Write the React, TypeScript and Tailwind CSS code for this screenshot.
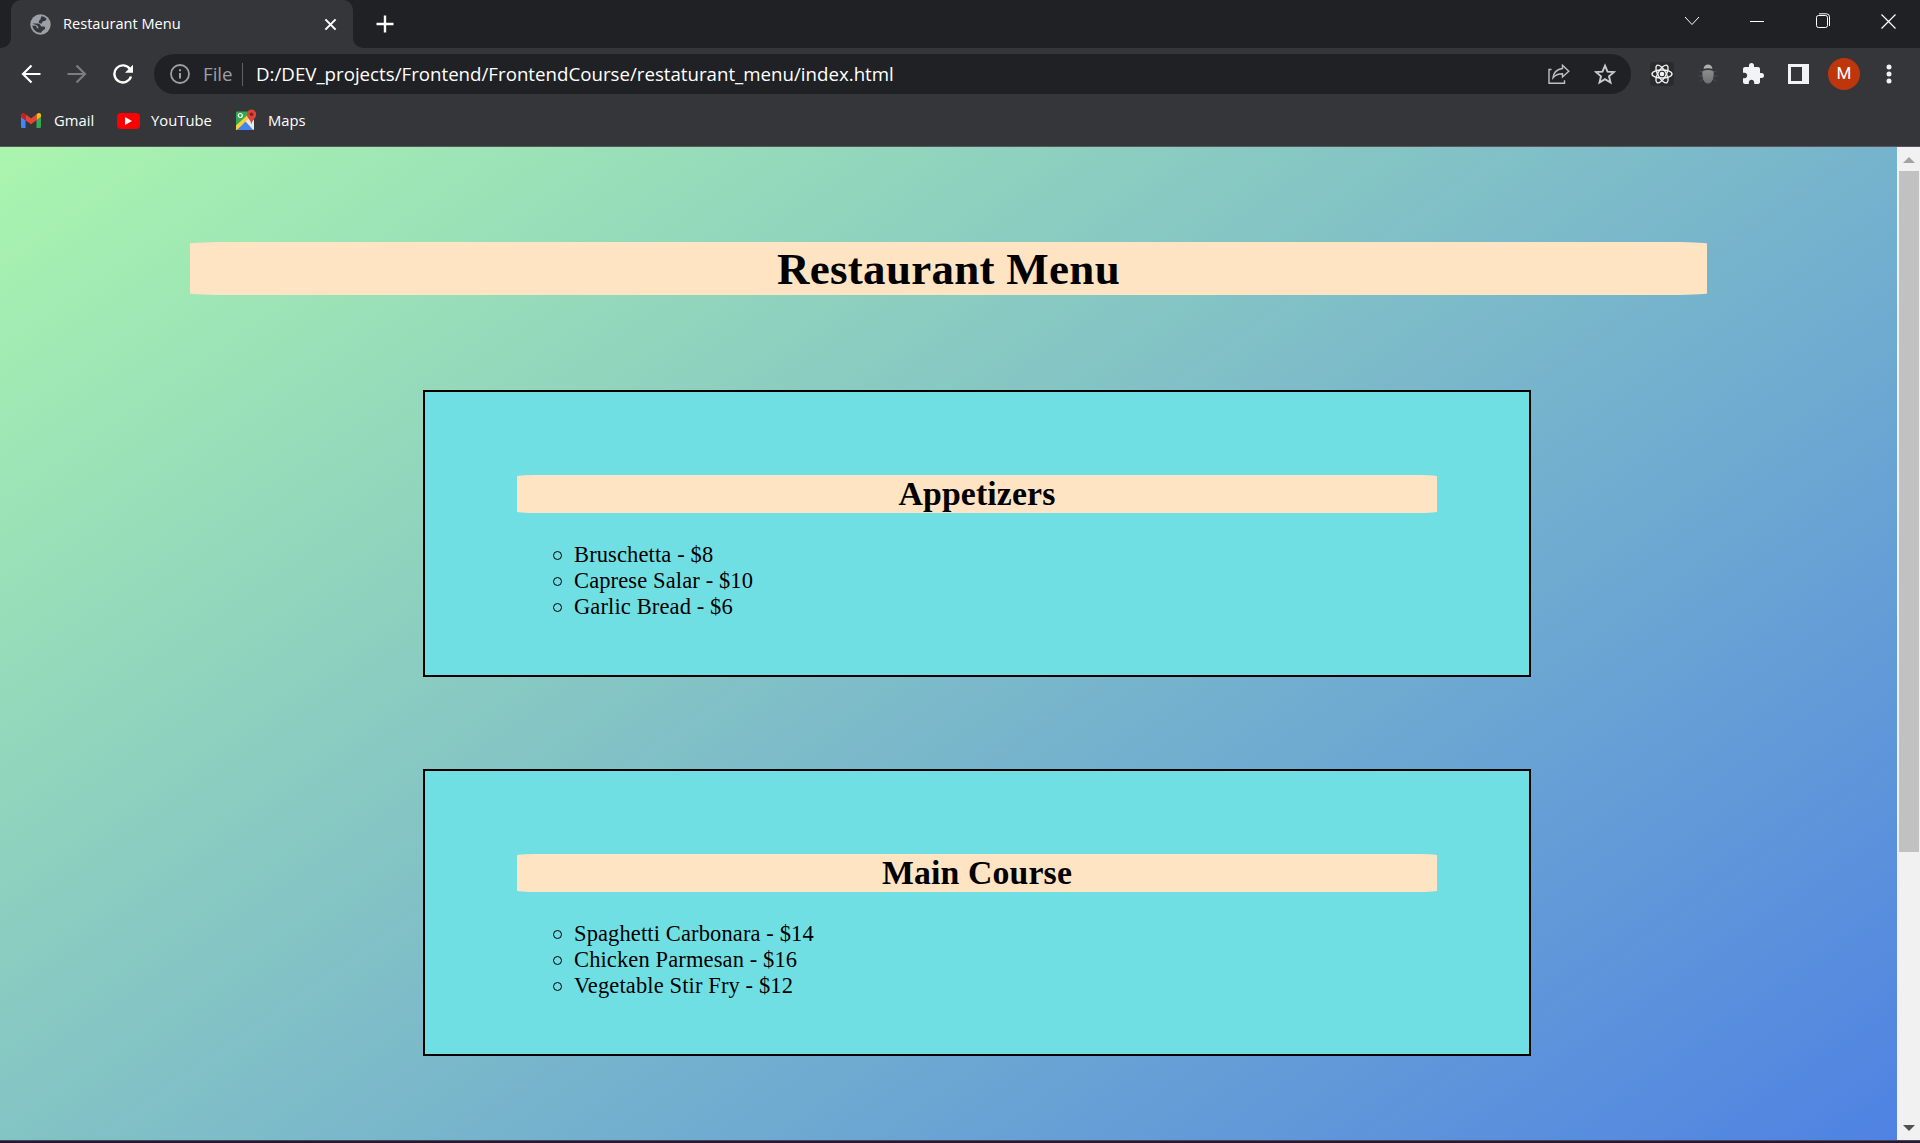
import React from "react";
import { MdExtension } from "react-icons/md";

const sections = [
  { title: "Appetizers", items: ["Bruschetta - $8", "Caprese Salar - $10", "Garlic Bread - $6"] },
  { title: "Main Course", items: ["Spaghetti Carbonara - $14", "Chicken Parmesan - $16", "Vegetable Stir Fry - $12"] },
];

function GlobeIcon() {
  return (
    <svg width="21" height="21" viewBox="0 0 21 21">
      <circle cx="10.5" cy="10.5" r="10.2" fill="#9aa0a6" />
      <path fill="#35363a" d="M11.500 2.200c2 .2 3.900 1.200 5.200 2.700l-1.200 1.600c-.8.900-2 .3-2.800 1-.6.600-.2 1.600-1.200 1.900-1.300.3-2.500-.4-2.700-1.500-.2-1 .9-1.500 1.500-2.300.8-1 .3-2.300 1.200-3.400z" />
      <path fill="#35363a" d="M2.300 9.500h5.500c1.900 0 2.600 1.100 2.900 2.200.2.700.9.800 1.700.8h1.400c1.500.1 1.700 1.500 1 2.500-.9 1.300-2.900 1.500-3.700 3.700-4.700.3-8.200-3-8.800-7.200l3 .2c1.200.1 1.500 1.300 1.400 2.300l1.600.4c.3-1.200-.2-2.500-1.500-3.200z" />
    </svg>
  );
}

function TabStrip() {
  return (
    <div className="flex h-12 shrink-0 items-stretch bg-[#202124]">
      <div className="w-[11px] bg-[#35363a]"><div className="h-full rounded-br-[10px] bg-[#202124]" /></div>
      <div className="flex w-[342px] items-center rounded-t-[10px] bg-[#35363a] pl-[19px] pr-[16px]">
        <GlobeIcon />
        <span className="ml-[12px] flex-1 text-[14.6px] text-white">Restaurant Menu</span>
        <svg width="13" height="13" viewBox="0 0 14 14" stroke="#fff" strokeWidth="2.2"><path d="M1.500 1.500l11 11M12.500 1.500l-11 11" /></svg>
      </div>
      <div className="w-[11px] bg-[#35363a]"><div className="h-full rounded-bl-[10px] bg-[#202124]" /></div>
      <div className="flex flex-1 items-center pl-[12px]">
        <svg width="18" height="18" viewBox="0 0 18 18" stroke="#fff" strokeWidth="2.4"><path d="M9 .5v17M.5 9h17" /></svg>
      </div>
      <div className="flex h-[42px] items-center text-white">
        <svg width="16" height="10" viewBox="0 0 16 10" fill="none" stroke="currentColor" className="mr-[50px]"><path d="M1 1l7 7.5L15 1" /></svg>
        <svg width="14" height="14" viewBox="0 0 14 14" stroke="currentColor" className="mr-[51px]"><path d="M0 7.5h14" /></svg>
        <svg width="16" height="16" viewBox="0 0 16 16" fill="none" stroke="currentColor" className="mr-[50px]"><rect x="1.500" y="2.500" width="11" height="12" rx="2" /><path d="M4 .8h7.500q3 0 3 3V13" /></svg>
        <svg width="15" height="15" viewBox="0 0 15 15" stroke="currentColor" strokeWidth="1.200" className="mr-[24px]"><path d="M.5.5l14 14M14.500.5l-14 14" /></svg>
      </div>
    </div>
  );
}

function ReactIcon() {
  return (
    <svg width="24" height="24" viewBox="0 0 24 24" fill="none" stroke="#f1f3f4" strokeWidth="1.400" className="rounded-sm bg-[#2b2b2d]">
      <ellipse cx="12" cy="12" rx="10" ry="4" />
      <ellipse cx="12" cy="12" rx="10" ry="4" transform="rotate(60 12 12)" />
      <ellipse cx="12" cy="12" rx="10" ry="4" transform="rotate(120 12 12)" />
      <circle cx="12" cy="12" r="1.600" fill="#f1f3f4" />
    </svg>
  );
}

function BugIcon() {
  return (
    <svg width="20" height="20" viewBox="0 0 20 20">
      <defs><linearGradient id="shell" x1="0" y1="0" x2="0" y2="1"><stop offset="0" stopColor="#8e8e8e" /><stop offset="1" stopColor="#707070" /></linearGradient></defs>
      <path d="M5 8.500L1.500 7M4 12H.5M5 15l-3 2.500M15 8.500L18.500 7M16 12h3.500M15 15l3 2.500" stroke="#4c4d50" fill="none" />
      <path d="M5.500 4.800C6 1.800 8 .5 10 .5s4 1.300 4.500 4.300q-4.500-1-9 0z" fill="#b0b0b0" />
      <path d="M4.600 7q5.400-1.800 10.800 0c1 6-1 12.500-5.400 12.500S3.600 13 4.600 7z" fill="url(#shell)" />
    </svg>
  );
}

function Toolbar() {
  return (
    <div className="flex h-[52px] shrink-0 items-center bg-[#35363a] pl-[21px]">
      <svg width="20" height="20" viewBox="0 0 20 20" fill="none" stroke="#fff" strokeWidth="2.200"><path d="M19.500 10H2M10.500 1.500L2 10l8.500 8.500" /></svg>
      <svg width="20" height="20" viewBox="0 0 20 20" fill="none" stroke="#7c7d80" strokeWidth="2.200" className="ml-[26px]"><path d="M.5 10H18M9.500 1.500L18 10l-8.500 8.500" /></svg>
      <svg width="20" height="20" viewBox="0 0 20 20" fill="none" stroke="#fff" strokeWidth="2.400" className="ml-[26px]"><path d="M17 5.200A8.500 8.500 0 1 0 18 12.500" /><path d="M20 .8v8h-8z" fill="#fff" stroke="none" /></svg>
      <div className="ml-[21px] flex h-10 w-[1477px] items-center rounded-full bg-[#202124] pl-[16px] pr-[15px]">
        <svg width="20" height="20" viewBox="0 0 20 20" fill="none" stroke="#9aa0a6" strokeWidth="1.800"><circle cx="10" cy="10" r="9" /><path d="M10 9v5.500M10 5.200v2" strokeWidth="2" /></svg>
        <span className="ml-[13px] w-[29px] text-[18.700px] text-[#9aa0a6]">File</span>
        <div className="ml-[10px] mr-[13px] h-[23px] w-px bg-[#5f6368]" />
        <span className="flex-1 text-[18.720px] text-white">D:/DEV_projects/Frontend/FrontendCourse/restaturant_menu/index.html</span>
        <svg width="22" height="20" viewBox="0 0 22 20" fill="none" stroke="#bdc1c6" strokeWidth="1.400"><path d="M3.500 5.500H1v13.700h15.500v-3" /><path d="M14.500 1.300l6.300 5.900-6.300 5.800V9.800c-4 0-7 1-9.500 4 .6-5 4-8.600 9.500-9.300z" /></svg>
        <svg width="22" height="22" viewBox="0 0 22 22" fill="none" stroke="#c8cacd" strokeWidth="1.900" className="ml-[24px]"><path d="M11 2.600l2.500 6 6.400.5-4.900 4.200 1.500 6.300-5.500-3.400-5.500 3.400L7 13.300 2.100 9.100l6.400-.5z" /></svg>
      </div>
      <div className="flex items-center pl-[19px]">
        <ReactIcon />
        <div className="ml-[24px]"><BugIcon /></div>
        <MdExtension className="ml-[23px] size-[24px] text-[#f1f3f4]" />
        <div className="ml-[23px] h-5 w-[21px] border-y-[3px] border-l-[3px] border-r-[7px] border-[#f1f3f4] bg-[#35363a]" />
        <div className="ml-[19px] flex size-8 items-center justify-center rounded-full bg-[#bf360c] font-[Roboto] text-[17px] text-white">M</div>
        <svg width="6" height="20" viewBox="0 0 6 20" fill="#f1f3f4" className="ml-[26px]"><circle cx="3" cy="3" r="2.500" /><circle cx="3" cy="10" r="2.500" /><circle cx="3" cy="17" r="2.500" /></svg>
      </div>
    </div>
  );
}

function GmailLogo() {
  return (
    <svg width="20" height="15" viewBox="52 42 88 66">
      <path fill="#4285f4" d="M58 108h14V74L52 59v43c0 3.320 2.690 6 6 6" />
      <path fill="#34a853" d="M120 108h14c3.320 0 6-2.690 6-6V59l-20 15" />
      <path fill="#fbbc04" d="M120 48v26l20-15v-8c0-7.420-8.470-11.650-14.400-7.200" />
      <path fill="#ea4335" d="M72 74V48l24 18 24-18v26L96 92" />
      <path fill="#c5221f" d="M52 51v8l20 15V48l-5.600-4.200c-5.940-4.450-14.400-.22-14.400 7.200" />
    </svg>
  );
}

function MapsLogo() {
  return (
    <svg width="22" height="22" viewBox="0 0 22 22">
      <path fill="#34a853" d="M2 2.500h14L1 18V3.500q0-1 1-1z" />
      <path fill="#fbd03b" d="M1 16.500L12.500 6 16 9 2 21H1z" />
      <path fill="#4285f4" d="M2.500 21L10.500 12.500 18 21z" />
      <path fill="#e8eaed" d="M10.500 12.500L15 8l4 3v9.500l-1 .5z" />
      <circle cx="5.300" cy="6.500" r="2" fill="none" stroke="#fff" strokeWidth="1.200" />
      <path fill="#db4437" d="M16.500.5a4.700 4.700 0 0 1 4.700 4.700c0 4-3.900 5-4.700 10.300-.8-5.300-4.700-6.300-4.700-10.300A4.700 4.700 0 0 1 16.500.5z" />
      <circle cx="16.500" cy="5.200" r="1.700" fill="#7b231d" />
    </svg>
  );
}

function Bookmarks() {
  return (
    <div className="flex h-[47px] shrink-0 items-center border-b border-[#5a5659] bg-[#35363a] pb-[5px] pl-[21px] text-[14.800px] text-white">
      <GmailLogo />
      <span className="ml-[13px] w-[40px] whitespace-nowrap">Gmail</span>
      <div className="ml-[23px] flex h-4 w-[23px] items-center justify-center rounded-[4px] bg-[#f00]">
        <svg width="7" height="8" viewBox="0 0 7 8" fill="#fff"><path d="M0 0l7 4-7 4z" /></svg>
      </div>
      <span className="ml-[11px] w-[61px] whitespace-nowrap">YouTube</span>
      <div className="-mt-[2px] ml-[23px]"><MapsLogo /></div>
      <span className="ml-[11px]">Maps</span>
    </div>
  );
}

function MenuSection({ title, items }: { title: string; items: string[] }) {
  return (
    <section className="mb-[92px] ml-[423px] h-[287px] w-[1108px] border-2 border-black bg-[#70dfe3] px-[92px] pt-[83px]">
      <h2 className="h-[38px] rounded-[3%] bg-[#ffe4c4] text-center text-[33.750px] font-bold leading-[38px] tracking-[0.150px]">{title}</h2>
      <ul className="mt-[29px] pl-[36px]">
        {items.map((item) => (
          <li key={item} className="flex h-[26px] items-center text-[22.500px] leading-[26px] tracking-[0.120px]">
            <span className="mr-[12px] mt-[1px] size-[9px] rounded-full border-[1.500px] border-black" />
            {item}
          </li>
        ))}
      </ul>
    </section>
  );
}

function ScrollBar() {
  return (
    <div className="flex w-[23px] flex-col bg-[#f1f1f1] pl-[2px]">
      <div className="flex h-6 items-center justify-center pr-px pt-[2px]">
        <svg width="12" height="6" viewBox="0 0 12 6" fill="#a3a3a3"><path d="M0 6l6-6 6 6z" /></svg>
      </div>
      <div className="h-[681px] w-5 bg-[#c1c1c1]" />
      <div className="flex flex-1 items-end justify-center pb-[9px] pr-px">
        <svg width="12" height="6" viewBox="0 0 12 6" fill="#505050"><path d="M0 0h12L6 6z" /></svg>
      </div>
    </div>
  );
}

export default function App() {
  return (
    <div className="flex h-[1143px] w-[1920px] flex-col overflow-hidden bg-[#202124] font-['Open_Sans',sans-serif]">
      <TabStrip />
      <Toolbar />
      <Bookmarks />
      <div className="flex h-[993px] shrink-0">
        <main className="w-[1897px] overflow-hidden bg-[linear-gradient(145deg,#aaf5ae,#4f82e3)] pt-[95px] font-['Liberation_Serif',serif] text-black">
          <h1 className="mx-auto mb-[95px] h-[53px] w-[1517px] rounded-[3%] bg-[#ffe4c4] text-center text-[45px] font-bold leading-[55px] tracking-[0.280px]">Restaurant Menu</h1>
          {sections.map((s) => <MenuSection key={s.title} {...s} />)}
        </main>
        <ScrollBar />
      </div>
      <div className="h-[3px] shrink-0 border-t border-[#4a4650] bg-[#251a35]" />
    </div>
  );
}
